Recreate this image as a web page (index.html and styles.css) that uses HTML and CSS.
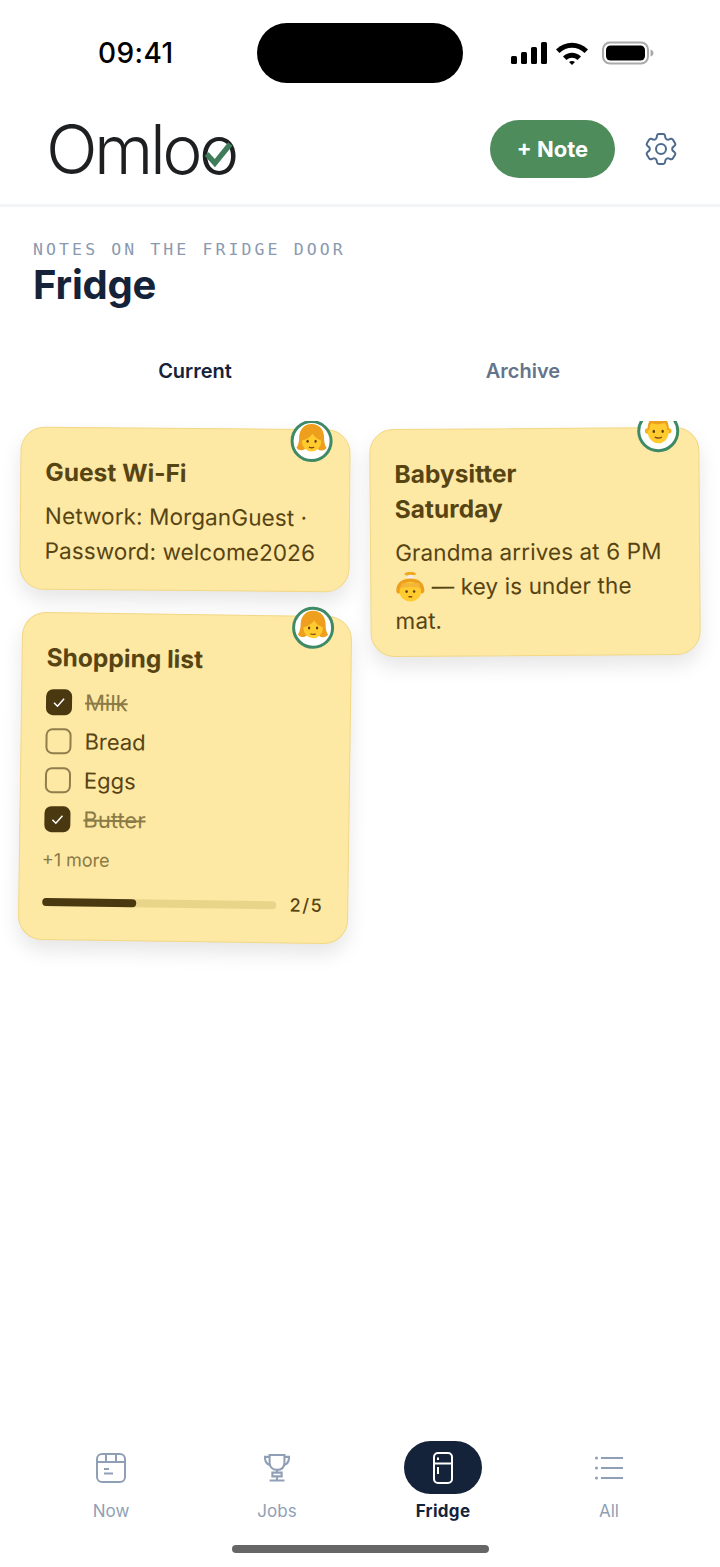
FILE: index.html
```html
<!DOCTYPE html>
<html>
<head>
    <title>Omloo Fridge</title>
    <link rel="stylesheet" href="styles.css">
</head>
<body>
<div class="page">

    <!-- status bar -->
    <div class="statusBar">
        <div class="time">09:41</div>
        <div class="island"></div>
        <div class="statusIcons">
            <svg width="38" height="22" viewBox="0 0 38 22"><rect x="1" y="14" width="6" height="8" rx="1.5"/><rect x="11" y="10" width="6" height="12" rx="1.5"/><rect x="21" y="5" width="6" height="17" rx="1.5"/><rect x="31" y="0" width="6" height="22" rx="1.5"/></svg>
            <svg width="34" height="24" viewBox="0 0 34 24"><path d="M1 8.500C10 -0.500 24 -0.500 33 8.500L29.500 12C22.500 5 11.500 5 4.500 12Z"/><path d="M8 15.500C13.500 10.500 20.500 10.500 26 15.500L22.500 19C19 16 15 16 11.500 19Z"/><path d="M14 21C15.800 19.500 18.200 19.500 20 21L17 24Z"/></svg>
            <svg class="battery" width="52" height="24" viewBox="0 0 52 24"><rect x="1" y="1.500" width="45" height="21" rx="7" fill="none" stroke="#aaa" stroke-width="2"/><rect x="4" y="4.500" width="39" height="15" rx="4.500"/><path d="M48.500 8.500c2 .5 3 2 3 3.500s-1 3-3 3.500z" fill="#aaa"/></svg>
        </div>
    </div>

    <!-- top header -->
    <div class="header">
        <div class="logo">
            <span class="logoText">Omloo</span>
            <svg class="logoCheck" width="31" height="28" viewBox="0 0 34 30"><path d="M4 15l9 10L30 4" fill="none" stroke="#3f7d5a" stroke-width="6"/></svg>
        </div>
        <div class="headerRight">
            <div class="noteButton">+ Note</div>
            <svg class="gear" width="40" height="40" viewBox="0 0 24 24" fill="none" stroke="#4f6a8f" stroke-width="1.200" stroke-linecap="round" stroke-linejoin="round"><path d="M9.594 3.940c.09-.542.56-.94 1.110-.94h2.593c.55 0 1.020.398 1.110.94l.213 1.281c.063.374.313.686.645.870.074.04.147.083.22.127.324.196.72.257 1.075.124l1.217-.456a1.125 1.125 0 011.370.49l1.296 2.247a1.125 1.125 0 01-.26 1.431l-1.003.827c-.293.24-.438.613-.431.992a6.759 6.759 0 010 .255c-.007.378.138.75.43.99l1.005.828c.424.35.534.954.26 1.430l-1.298 2.247a1.125 1.125 0 01-1.369.491l-1.217-.456c-.355-.133-.75-.072-1.076.124a6.570 6.570 0 01-.22.128c-.331.183-.581.495-.644.869l-.213 1.280c-.09.543-.56.941-1.110.941h-2.594c-.55 0-1.020-.398-1.110-.94l-.213-1.281c-.062-.374-.312-.686-.644-.87a6.520 6.520 0 01-.22-.127c-.325-.196-.72-.257-1.076-.124l-1.217.456a1.125 1.125 0 01-1.369-.49l-1.297-2.247a1.125 1.125 0 01.26-1.431l1.004-.827c.292-.24.437-.613.43-.992a6.932 6.932 0 010-.255c.007-.378-.138-.75-.43-.99l-1.004-.828a1.125 1.125 0 01-.26-1.430l1.297-2.247a1.125 1.125 0 011.370-.491l1.216.456c.356.133.751.072 1.076-.124.072-.044.146-.087.22-.128.332-.183.582-.495.644-.869l.214-1.281z"/><circle cx="12" cy="12" r="3"/></svg>
        </div>
    </div>

    <div class="main">
        <div class="heading">
            <div class="eyebrow">NOTES ON THE FRIDGE DOOR</div>
            <h1 class="title">Fridge</h1>
        </div>

        <div class="tabs">
            <div class="tab tabActive">Current</div>
            <div class="tab">Archive</div>
        </div>

        <div class="board">
            <div class="column">
                <div class="note noteWifi">
                    <div class="avatar">
                        <svg viewBox="0 0 36 36"><path d="M18 1C9 1 4 8 4 16c0 5-1 9-3 12 3 4 8 3 10 1h14c2 2 7 3 10-1-2-3-3-7-3-12C32 8 27 1 18 1z" fill="#ee9f1e"/><ellipse cx="18" cy="20" rx="11" ry="12" fill="#ffcb2e"/><path d="M6 20c6-1 10-4 13-8 2 3 5 6 11 8 1-8-4-14-12-14S5 12 6 20z" fill="#ee9f1e"/><ellipse cx="13.500" cy="20.500" rx="1.300" ry="1.700" fill="#5c3d10"/><ellipse cx="22.500" cy="20.500" rx="1.300" ry="1.700" fill="#5c3d10"/><path d="M15 27c2 1 4 1 6 0" stroke="#8a4b12" stroke-width="1.500" fill="none"/></svg>
                    </div>
                    <h2 class="noteTitle">Guest Wi-Fi</h2>
                    <p class="noteBody">Network: MorganGuest · Password: welcome2026</p>
                </div>

                <div class="note noteList">
                    <div class="avatar">
                        <svg viewBox="0 0 36 36"><path d="M18 1C9 1 4 8 4 16c0 5-1 9-3 12 3 4 8 3 10 1h14c2 2 7 3 10-1-2-3-3-7-3-12C32 8 27 1 18 1z" fill="#ee9f1e"/><ellipse cx="18" cy="20" rx="11" ry="12" fill="#ffcb2e"/><path d="M6 20c6-1 10-4 13-8 2 3 5 6 11 8 1-8-4-14-12-14S5 12 6 20z" fill="#ee9f1e"/><ellipse cx="13.500" cy="20.500" rx="1.300" ry="1.700" fill="#5c3d10"/><ellipse cx="22.500" cy="20.500" rx="1.300" ry="1.700" fill="#5c3d10"/><path d="M15 27c2 1 4 1 6 0" stroke="#8a4b12" stroke-width="1.500" fill="none"/></svg>
                    </div>
                    <h2 class="noteTitle">Shopping list</h2>
                    <div class="checkList">
                        <div class="checkRow done">
                            <span class="box boxOn"><svg width="14" height="14" viewBox="0 0 14 14"><path d="M2 7.500l3.500 3.500L12 3.500" fill="none" stroke="#fff" stroke-width="1.500"/></svg></span>
                            <span class="rowText">Milk</span>
                        </div>
                        <div class="checkRow">
                            <span class="box"></span>
                            <span class="rowText">Bread</span>
                        </div>
                        <div class="checkRow">
                            <span class="box"></span>
                            <span class="rowText">Eggs</span>
                        </div>
                        <div class="checkRow done">
                            <span class="box boxOn"><svg width="14" height="14" viewBox="0 0 14 14"><path d="M2 7.500l3.500 3.500L12 3.500" fill="none" stroke="#fff" stroke-width="1.500"/></svg></span>
                            <span class="rowText">Butter</span>
                        </div>
                    </div>
                    <div class="more">+1 more</div>
                    <div class="progressRow">
                        <div class="track"><div class="fill" style="width: 40%"></div></div>
                        <div class="count">2/5</div>
                    </div>
                </div>
            </div>

            <div class="column">
                <div class="note noteSitter">
                    <div class="avatar avatarHigh">
                        <svg viewBox="0 0 36 36"><circle cx="6" cy="20" r="3" fill="#f0b020"/><circle cx="30" cy="20" r="3" fill="#f0b020"/><ellipse cx="18" cy="20" rx="12" ry="14" fill="#ffcb2e"/><path d="M6 19c0-11 5-16 12-16s12 5 12 16l-2 0c0-4-1-7-3-8-4 2-10 2-14 0-2 1-3 4-3 8z" fill="#ee9f1e"/><ellipse cx="13" cy="20.500" rx="1.400" ry="1.800" fill="#5c3d10"/><ellipse cx="23" cy="20.500" rx="1.400" ry="1.800" fill="#5c3d10"/><path d="M14 27c3 1.500 5 1.500 8 0" stroke="#8a4b12" stroke-width="1.500" fill="none"/></svg>
                    </div>
                    <h2 class="noteTitle">Babysitter Saturday</h2>
                    <p class="noteBody">Grandma arrives at 6 PM
                        <svg class="inlineEmoji" viewBox="0 0 32 32"><path d="M16 0c-3 0-6 1-6 2.500S14 4 16 3.500 22 4 22 2.500 19 0 16 0z" fill="#f0a81f"/><circle cx="16" cy="6" r="3" fill="#eee"/><path d="M1 20C1 11 8 7 16 7s15 4 15 13c0 3-3 4-5 2H6c-2 2-5 1-5-2z" fill="#ee9f1e"/><ellipse cx="16" cy="21" rx="11.500" ry="10.500" fill="#ffcb2e"/><path d="M5 18c4-3 18-3 22 0l-2-6H7z" fill="#f3b63a"/><circle cx="12" cy="21" r="1.400" fill="#5c3d10"/><circle cx="20" cy="21" r="1.400" fill="#5c3d10"/><path d="M14 26.500h4" stroke="#8a4b12" stroke-width="1.500"/></svg>
                        — key is under the mat.</p>
                </div>
            </div>
        </div>
    </div>

    <!-- bottom tabs -->
    <div class="nav">
        <div class="navItem">
            <div class="navIcon">
                <svg width="32" height="32" viewBox="0 0 32 32" fill="none" stroke="#8f9fb5" stroke-width="2"><rect x="2" y="2" width="28" height="28" rx="5"/><path d="M2 10h28M11 2v8M21 2v8M9 17h5M9 21.500h9"/></svg>
            </div>
            <div class="navLabel">Now</div>
        </div>
        <div class="navItem">
            <div class="navIcon">
                <svg width="26" height="30" viewBox="0 0 28 32" fill="none" stroke="#8f9fb5" stroke-width="2.200"><path d="M6 2h16v8c0 5-3 8-8 8s-8-3-8-8z"/><path d="M6 4H1c0 5 2 8 6 9M22 4h5c0 5-2 8-6 9"/><path d="M14 18v3M9 21h10v4H9zM14 25v4M6 29.500h16"/></svg>
            </div>
            <div class="navLabel">Jobs</div>
        </div>
        <div class="navItem navActive">
            <div class="navIcon">
                <svg width="20" height="32" viewBox="0 0 20 32" fill="none" stroke="#fff" stroke-width="2"><rect x="1" y="1" width="18" height="30" rx="4"/><path d="M1 11.500h18M5 5.500v2.500M5 15v7"/></svg>
            </div>
            <div class="navLabel">Fridge</div>
        </div>
        <div class="navItem">
            <div class="navIcon">
                <svg width="28" height="24" viewBox="0 0 28 24" fill="none" stroke="#8f9fb5" stroke-width="2"><path d="M6 2h22M6 12h22M6 22h22"/><circle cx="1.500" cy="2" r="1.500" fill="#8f9fb5" stroke="none"/><circle cx="1.500" cy="12" r="1.500" fill="#8f9fb5" stroke="none"/><circle cx="1.500" cy="22" r="1.500" fill="#8f9fb5" stroke="none"/></svg>
            </div>
            <div class="navLabel">All</div>
        </div>
    </div>
    <div class="homeBar"></div>
</div>
</body>
</html>
```

FILE: styles.css
```css
* {
    box-sizing: border-box;
}
body {
    margin: 0;
    background-color: #fff;
    font-family: Inter, "Liberation Sans", sans-serif;
}
.page {
    width: 720px;
    height: 1567px;
    display: flex;
    flex-direction: column;
    overflow: hidden;
}

/* status bar */
.statusBar {
    height: 100px;
    padding-top: 23px;
    display: grid;
    grid-template-columns: 257px 206px 1fr;
    align-items: start;
}
.time {
    padding-left: 98px;
    padding-top: 13px;
    font-size: 28px;
    font-weight: 500;
    letter-spacing: 0.4px;
    color: #000;
}
.island {
    height: 60px;
    background-color: #000;
    border-radius: 30px;
}
.statusIcons {
    display: flex;
    align-items: center;
    gap: 7px;
    padding-left: 47px;
    padding-top: 18px;
}
.battery {
    margin-left: 6px;
}

/* header */
.header {
    height: 107px;
    padding: 20px 39px 0 46px;
    display: flex;
    justify-content: space-between;
    border-bottom: 3px solid #f3f4f5;
}
.logo {
    position: relative;
    height: 58px;
    line-height: 58px;
}
.logoText {
    font-size: 68px;
    font-weight: 350;
    letter-spacing: -3.500px;
    color: #1d1f21;
}
.logoCheck {
    position: absolute;
    left: 157px;
    top: 20px;
}
.headerRight {
    display: flex;
    align-items: center;
    gap: 26px;
    height: 58px;
}
.noteButton {
    width: 125px;
    height: 58px;
    border-radius: 29px;
    background-color: #4e8c5b;
    color: #fff;
    font-size: 22px;
    font-weight: 700;
    text-align: center;
    line-height: 58px;
}

/* heading */
.main {
    flex: 1;
}
.heading {
    padding: 32px 33px 0;
}
.eyebrow {
    font-family: "DejaVu Sans Mono", monospace;
    font-size: 16.500px;
    letter-spacing: 3.100px;
    line-height: 21px;
    color: #8a99ae;
}
.title {
    margin: 0;
    font-size: 40px;
    font-weight: 700;
    letter-spacing: -0.200px;
    line-height: 50px;
    color: #14233a;
}
.tabs {
    display: flex;
    padding: 0 33px 0 31px;
    margin-top: 46px;
}
.tab {
    flex: 1;
    text-align: center;
    font-size: 20px;
    font-weight: 600;
    line-height: 30px;
    color: #64748b;
}
.tabActive {
    color: #14233a;
}

/* notes */
.board {
    margin-top: 35px;
    padding: 0 20px 40px;
    display: grid;
    grid-template-columns: 330px 330px;
    gap: 20px;
    overflow: hidden;
    align-items: start;
}
.column {
    display: flex;
    flex-direction: column;
    gap: 23px;
}
.note {
    position: relative;
    background-color: #fde8a4;
    border: 1px solid #f2d884;
    border-radius: 24px;
    padding: 27px 24px 21px;
    box-shadow: 0 10px 20px rgba(0, 0, 0, 0.1);
    color: #574413;
}
.noteWifi {
    margin-top: 7px;
    transform: rotate(0.5deg);
}
.noteList {
    padding-bottom: 27px;
    transform: rotate(0.8deg);
}
.noteSitter {
    margin-top: 7px;
    padding-bottom: 18px;
    transform: rotate(-0.4deg);
}
.noteSitter .noteBody {
    margin-top: 9px;
    line-height: 34px;
}
.noteTitle {
    margin: 0;
    padding-right: 60px;
    font-size: 24.500px;
    font-weight: 700;
    line-height: 35px;
}
.noteBody {
    margin: 8px 0 0;
    font-size: 22.500px;
    letter-spacing: 0.100px;
    line-height: 35px;
}
.inlineEmoji {
    width: 30px;
    height: 30px;
    vertical-align: -7px;
}
.avatar {
    position: absolute;
    top: -10px;
    right: 17px;
    width: 42px;
    height: 42px;
    border: 3px solid #3f8a66;
    border-radius: 50%;
    background-color: #fff;
    overflow: hidden;
}
.avatarHigh {
    top: -18px;
    right: 19px;
}
.avatar svg {
    display: block;
    width: 32px;
    height: 32px;
    margin: 0 auto;
}

/* shopping list */
.checkList {
    margin-top: 7px;
}
.checkRow {
    display: flex;
    align-items: center;
    gap: 13px;
    height: 39px;
    font-size: 22px;
}
.box {
    width: 26px;
    height: 26px;
    border: 2px solid #8f7d4c;
    border-radius: 7px;
    display: flex;
    align-items: center;
    justify-content: center;
}
.boxOn {
    background-color: #4a3810;
    border-color: #4a3810;
}
.done .rowText {
    text-decoration: line-through;
    color: #8a7a45;
}
.more {
    margin-top: 7px;
    margin-left: -2px;
    font-size: 18px;
    line-height: 30px;
    color: #8a7a45;
}
.progressRow {
    display: flex;
    align-items: center;
    gap: 13px;
    margin-top: 16px;
    margin-left: -1px;
}
.track {
    flex: 1;
    height: 8px;
    border-radius: 4px;
    background-color: #e9d589;
}
.fill {
    height: 8px;
    border-radius: 4px;
    background-color: #4a3810;
}
.count {
    font-size: 18px;
    font-weight: 500;
    letter-spacing: 1.600px;
}

/* bottom nav */
.nav {
    display: grid;
    grid-template-columns: repeat(4, 166px);
    padding: 1px 28px 0;
}
.navItem {
    display: flex;
    flex-direction: column;
    align-items: center;
}
.navIcon {
    width: 78px;
    height: 53px;
    border-radius: 27px;
    display: flex;
    align-items: center;
    justify-content: center;
}
.navActive .navIcon {
    background-color: #14233a;
}
.navLabel {
    margin-top: 6px;
    font-size: 17px;
    line-height: 22px;
    color: #8f9fb5;
}
.navActive .navLabel {
    font-weight: 700;
    letter-spacing: 0.300px;
    color: #14233a;
}
.homeBar {
    width: 257px;
    height: 8px;
    margin: 23px auto 14px;
    border-radius: 4px;
    background-color: #666;
}
```
